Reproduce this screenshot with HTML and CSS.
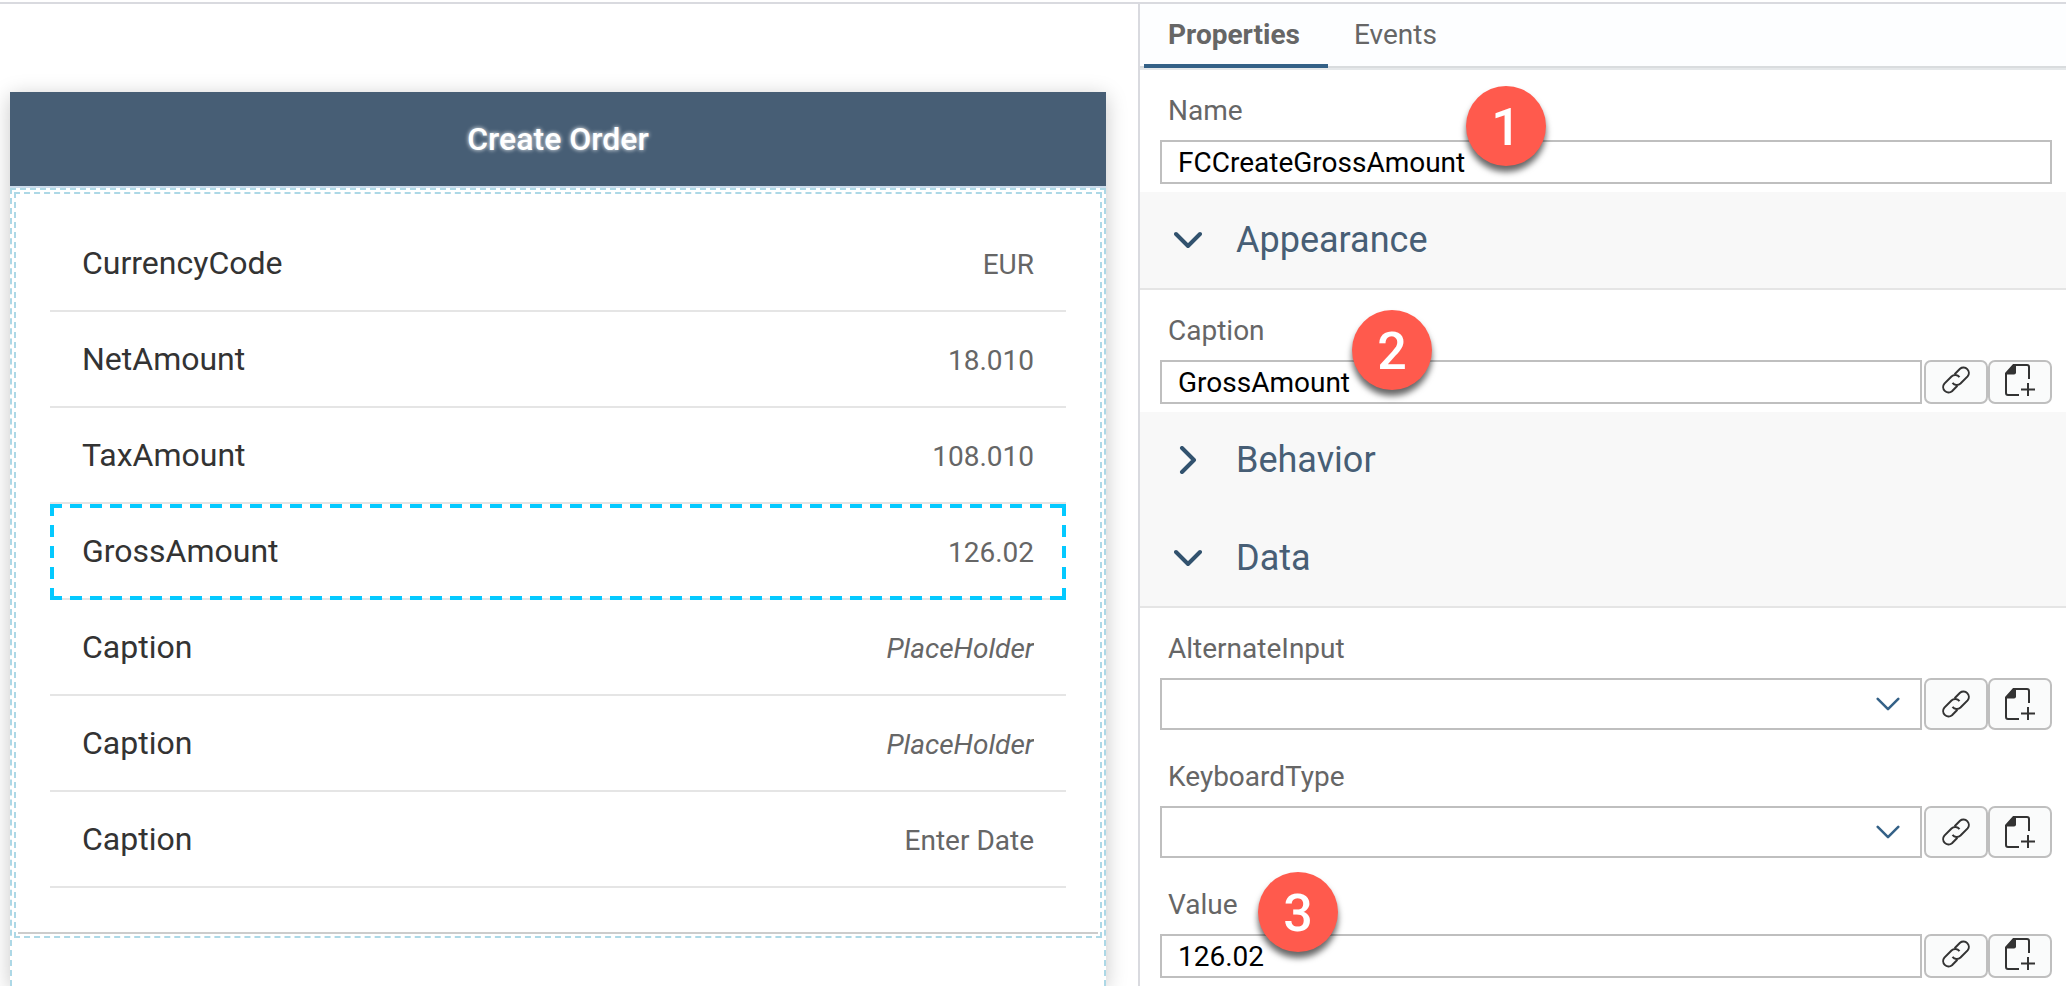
FILE: index.html
```html
<!DOCTYPE html>
<html lang="en">
<head>
<meta charset="utf-8">
<title>Create Order</title>
<link rel="stylesheet" href="styles.css">
</head>
<body>
<svg class="sprite" aria-hidden="true">
  <symbol id="i-down" viewBox="0 0 28 28"><path d="M2 8 14 20 26 8"/></symbol>
  <symbol id="i-right" viewBox="0 0 28 28"><path d="M8 2 20 14 8 26"/></symbol>
  <symbol id="i-link" viewBox="0 0 32 32">
    <path d="M14.6 10.2 20 4.800a5.400 5.400 0 0 1 7.600 7.600L20.500 19.500a5.400 5.400 0 0 1-8-.600"/>
    <path d="M17.400 21.800 12 27.200a5.400 5.400 0 0 1-7.600-7.600L11.500 12.500a5.400 5.400 0 0 1 8 .600"/>
  </symbol>
  <symbol id="i-new" viewBox="0 0 32 32">
    <path d="M15 31H4a2 2 0 0 1-2-2V9.500L9.500 1H23a2 2 0 0 1 2 2v12M24 19v13M17 25.500h14"/>
    <path class="fold" d="M2 10.500V9L9.500 1H12v7.500a2 2 0 0 1-2 2Z"/>
  </symbol>
</svg>
<main class="app">
  <section class="canvas">
    <div class="device">
      <h1 class="device-title">Create Order</h1>
      <div class="page-frame">
        <div class="section-frame">
          <form class="cells">
            <div class="cell"><label for="c1">CurrencyCode</label><input id="c1" readonly value="EUR"></div>
            <div class="cell"><label for="c2">NetAmount</label><input id="c2" readonly value="18.010"></div>
            <div class="cell"><label for="c3">TaxAmount</label><input id="c3" readonly value="108.010"></div>
            <div class="cell selected"><label for="c4">GrossAmount</label><input id="c4" readonly value="126.02"></div>
            <div class="cell"><label for="c5">Caption</label><input id="c5" readonly placeholder="PlaceHolder"></div>
            <div class="cell"><label for="c6">Caption</label><input id="c6" readonly placeholder="PlaceHolder"></div>
            <div class="cell"><label for="c7">Caption</label><input id="c7" readonly value="Enter Date"></div>
          </form>
        </div>
      </div>
    </div>
  </section>
  <aside class="panel">
    <nav class="tabs">
      <button class="tab active" type="button">Properties</button>
      <button class="tab" type="button">Events</button>
    </nav>
    <div class="fields">
      <div class="field">
        <label for="name">Name</label>
        <div class="control"><input id="name" value="FCCreateGrossAmount"></div>
        <span class="badge badge-1">1</span>
      </div>
    </div>
    <button class="group" type="button"><svg><use href="#i-down"/></svg>Appearance</button>
    <div class="fields">
      <div class="field">
        <label for="caption">Caption</label>
        <div class="control"><input id="caption" value="GrossAmount"><button class="tool" type="button" aria-label="Bind"><svg><use href="#i-link"/></svg></button><button class="tool" type="button" aria-label="Create rule"><svg><use href="#i-new"/></svg></button></div>
        <span class="badge badge-2">2</span>
      </div>
    </div>
    <button class="group closed" type="button"><svg><use href="#i-right"/></svg>Behavior</button>
    <button class="group" type="button"><svg><use href="#i-down"/></svg>Data</button>
    <div class="fields">
      <div class="field">
        <label for="alt">AlternateInput</label>
        <div class="control tall"><div class="combo"><select id="alt"><option></option></select><svg><use href="#i-down"/></svg></div><button class="tool" type="button" aria-label="Bind"><svg><use href="#i-link"/></svg></button><button class="tool" type="button" aria-label="Create rule"><svg><use href="#i-new"/></svg></button></div>
      </div>
      <div class="field">
        <label for="kbd">KeyboardType</label>
        <div class="control tall"><div class="combo"><select id="kbd"><option></option></select><svg><use href="#i-down"/></svg></div><button class="tool" type="button" aria-label="Bind"><svg><use href="#i-link"/></svg></button><button class="tool" type="button" aria-label="Create rule"><svg><use href="#i-new"/></svg></button></div>
      </div>
      <div class="field">
        <label for="value">Value</label>
        <div class="control"><input id="value" value="126.02"><button class="tool" type="button" aria-label="Bind"><svg><use href="#i-link"/></svg></button><button class="tool" type="button" aria-label="Create rule"><svg><use href="#i-new"/></svg></button></div>
        <span class="badge badge-3">3</span>
      </div>
    </div>
  </aside>
</main>
</body>
</html>
```
FILE: styles.css
```css
* { box-sizing: border-box; }
html { height: 100%; overflow: hidden; }
body {
  margin: 0;
  height: 100%;
  overflow: hidden;
  padding-top: 2px;
  background: #fff;
  font-family: Roboto, "Liberation Sans", sans-serif;
  font-size: 28px;
  color: #666;
}
input, select, button {
  font: inherit;
  color: inherit;
  margin: 0;
  border-radius: 0;
  outline: 0;
}
svg { display: block; fill: none; stroke: currentColor; }
.sprite { display: none; }

.app {
  display: grid;
  grid-template-columns: 1138fr 928fr;
  height: 100%;
  overflow: hidden;
  border-top: 2px solid #d9dadf;
}

/* Preview canvas */
.canvas {
  display: flex;
  min-width: 0;
  padding: 88px 32px 0 10px;
  overflow: hidden;
}
.device {
  display: flex;
  flex-direction: column;
  flex: 1;
  min-width: 0;
  background: #fff;
  box-shadow: 0 4px 20px rgba(0, 0, 0, .22);
}
.device-title {
  margin: 0;
  border-bottom: 2px solid #ccdcec;
  background: #475e75;
  background-clip: padding-box;
  color: #fff;
  font-size: 32px;
  font-weight: 500;
  line-height: 94px;
  text-align: center;
  text-shadow: 0 0 4px #fff;
}
.page-frame {
  flex: 1;
  padding: 2px;
  border: 2px dashed #add8e6;
  border-bottom: 0;
}
.section-frame {
  padding: 2px;
  border: 2px dashed #add8e6;
}
.cells {
  padding: 20px 32px 44px;
  border-bottom: 2px solid #ccc;
}
.cell {
  position: relative;
  display: flex;
  align-items: baseline;
  padding: 0 32px;
  border-bottom: 2px solid #e5e5e5;
}
.cell label {
  color: #333;
  font-size: 32px;
  line-height: 94px;
}
.cell input {
  flex: 1;
  min-width: 0;
  padding: 0;
  border: 0;
  background: none;
  text-align: right;
}
.cell input::placeholder { color: #666; font-style: italic; opacity: 1; }
.selected::after {
  content: "";
  position: absolute;
  inset: 0 0 -2px;
  background:
    repeating-linear-gradient(90deg, #04c9ff 0 12px, transparent 12px 20px) top / 100% 4px no-repeat,
    repeating-linear-gradient(90deg, #04c9ff 0 12px, transparent 12px 20px) bottom / 100% 4px no-repeat,
    repeating-linear-gradient(#04c9ff 0 12px, transparent 12px 21px) left / 4px 100% no-repeat,
    repeating-linear-gradient(#04c9ff 0 12px, transparent 12px 21px) right / 4px 100% no-repeat;
}

/* Property panel */
.panel {
  min-width: 0;
  border-left: 2px solid #d9dadf;
}
.tabs {
  display: flex;
  gap: 2px;
  height: 66px;
  padding-left: 4px;
  border-bottom: 2px solid #e5e8ea;
  background: #fdfeff;
  box-shadow: inset 0 -2px #d9dcde;
}
.tab {
  min-width: 184px;
  padding: 2px 24px 0;
  border: 0;
  border-bottom: 4px solid transparent;
  background: none;
  line-height: 58px;
  text-align: left;
}
.tab.active { border-color: #346187; font-weight: 700; }
.fields {
  display: flex;
  flex-direction: column;
  gap: 6px;
  padding: 0 14px 8px 20px;
}
.field { position: relative; }
.field label {
  display: block;
  padding: 12px 8px 0;
  line-height: 58px;
}
.control {
  display: flex;
  height: 44px;
}
.control.tall { height: 52px; }
.control input {
  flex: 1;
  min-width: 0;
  padding: 0 16px;
  border: 2px solid #bfbfbf;
  background: #fff;
  color: #000;
}
.combo { position: relative; display: flex; flex: 1; min-width: 0; }
.combo select {
  flex: 1;
  appearance: none;
  border: 2px solid #bfbfbf;
  background: #fff;
}
.combo svg {
  position: absolute;
  top: 14px;
  right: 22px;
  width: 24px;
  height: 24px;
  color: #346187;
  stroke-width: 3;
  stroke-linecap: round;
  stroke-linejoin: round;
  pointer-events: none;
}
.tool {
  display: flex;
  align-items: center;
  justify-content: center;
  width: 64px;
  padding: 0 0 4px;
  border: 2px solid #bfbfbf;
  border-radius: 7px;
  background: #fafbfb;
  color: #333;
}
.tall .tool { padding: 0; }
:is(input, .combo) + .tool { margin-left: 2px; }
.tool svg { width: 32px; height: 32px; stroke-width: 2; }
.fold { fill: currentColor; stroke: none; }
.group {
  display: flex;
  align-items: center;
  gap: 34px;
  width: 100%;
  height: 98px;
  padding: 0 34px;
  border: 0;
  border-bottom: 2px solid #e5e5e5;
  background: #f8f8f8;
  color: #475e75;
  font-size: 36px;
}
.group.closed { border-color: #f8f8f8; }
.group svg {
  width: 28px;
  height: 28px;
  color: #32526e;
  stroke-width: 4;
  stroke-linecap: round;
  stroke-linejoin: round;
}

/* Step markers */
.badge {
  position: absolute;
  width: 80px;
  height: 80px;
  border-radius: 50%;
  background: #ff5a4d;
  box-shadow: 0 6px 6px rgba(0, 0, 0, .6);
  color: #fff;
  font-size: 52px;
  font-weight: 500;
  line-height: 84px;
  text-align: center;
}
.badge-1 { top: 16px; left: 306px; }
.badge-2 { top: 20px; left: 192px; }
.badge-3 { top: 8px; left: 98px; }
```
